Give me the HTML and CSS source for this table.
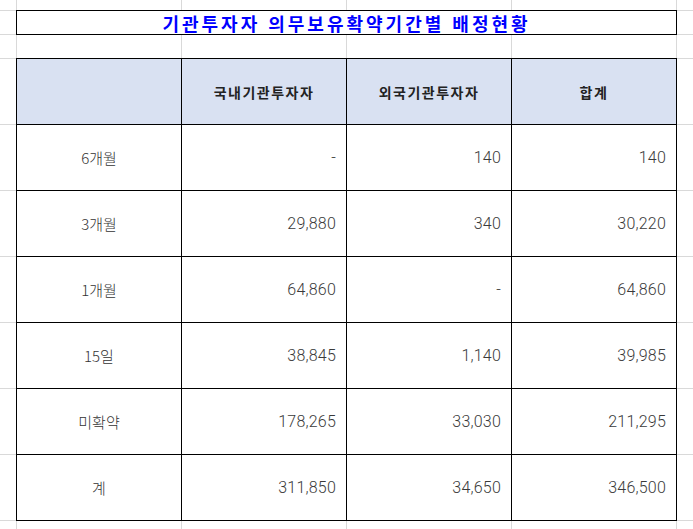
FILE: index.html
```html
<!DOCTYPE html>
<html lang="ko">
<head>
<meta charset="utf-8">
<link rel="stylesheet" href="styles.css">
</head>
<body>
<div class="sheet">
  <div class="c"></div><div class="c"></div><div class="c"></div><div class="c"></div><div class="c"></div><div class="c"></div>

  <div class="c"></div>
  <div class="c title">기관투자자 의무보유확약기간별 배정현황</div>
  <div class="c"></div>

  <div class="c"></div><div class="c"></div><div class="c"></div><div class="c"></div><div class="c"></div><div class="c"></div>

  <div class="c"></div>
  <div class="c t head"></div>
  <div class="c t head">국내기관투자자</div>
  <div class="c t head">외국기관투자자</div>
  <div class="c t head">합계</div>
  <div class="c"></div>

  <div class="c"></div>
  <div class="c t label">6개월</div>
  <div class="c t num">-</div>
  <div class="c t num">140</div>
  <div class="c t num">140</div>
  <div class="c"></div>

  <div class="c"></div>
  <div class="c t label">3개월</div>
  <div class="c t num">29,880</div>
  <div class="c t num">340</div>
  <div class="c t num">30,220</div>
  <div class="c"></div>

  <div class="c"></div>
  <div class="c t label">1개월</div>
  <div class="c t num">64,860</div>
  <div class="c t num">-</div>
  <div class="c t num">64,860</div>
  <div class="c"></div>

  <div class="c"></div>
  <div class="c t label">15일</div>
  <div class="c t num">38,845</div>
  <div class="c t num">1,140</div>
  <div class="c t num">39,985</div>
  <div class="c"></div>

  <div class="c"></div>
  <div class="c t label">미확약</div>
  <div class="c t num">178,265</div>
  <div class="c t num">33,030</div>
  <div class="c t num">211,295</div>
  <div class="c"></div>

  <div class="c"></div>
  <div class="c t label">계</div>
  <div class="c t num">311,850</div>
  <div class="c t num">34,650</div>
  <div class="c t num">346,500</div>
  <div class="c"></div>

  <div class="c"></div><div class="c"></div><div class="c"></div><div class="c"></div><div class="c"></div><div class="c"></div>
</div>
</body>
</html>
```

FILE: styles.css
```css
html, body {
  margin: 0;
  padding: 0;
  background: #ffffff;
}

.sheet {
  display: grid;
  grid-template-columns: 16px 164px 164px 164px 164px 1fr;
  grid-template-rows: 10px 23px 23px repeat(7, 65px) 1fr;
  gap: 1px;
  background: #d9d9d9;
  width: 693px;
  height: 529px;
  overflow: hidden;
  font-family: "Noto Sans CJK KR", "Noto Sans", sans-serif;
  color: #333333;
}

.c {
  background: #ffffff;
  min-width: 0;
  min-height: 0;
}

.title {
  grid-column: 2 / 6;
  outline: 1px solid #000000;
  display: flex;
  align-items: center;
  justify-content: center;
  color: #0000ff;
  font-weight: 700;
  font-size: 18px;
  letter-spacing: 3px;
  white-space: nowrap;
  line-height: 1;
}

.t {
  outline: 1px solid #000000;
  display: flex;
  align-items: center;
  font-size: 14px;
  line-height: 1;
}

.head {
  background: #d9e1f2;
  justify-content: center;
  font-weight: 700;
  color: #222222;
  letter-spacing: 1.5px;
}

.label {
  justify-content: center;
  font-size: 15px;
  font-weight: 300;
}

.num {
  justify-content: flex-end;
  padding-right: 10px;
  font-family: Roboto, "Noto Sans", sans-serif;
  font-size: 16px;
  font-weight: 300;
  letter-spacing: 0.2px;
  color: #3a3a3a;
}
```
